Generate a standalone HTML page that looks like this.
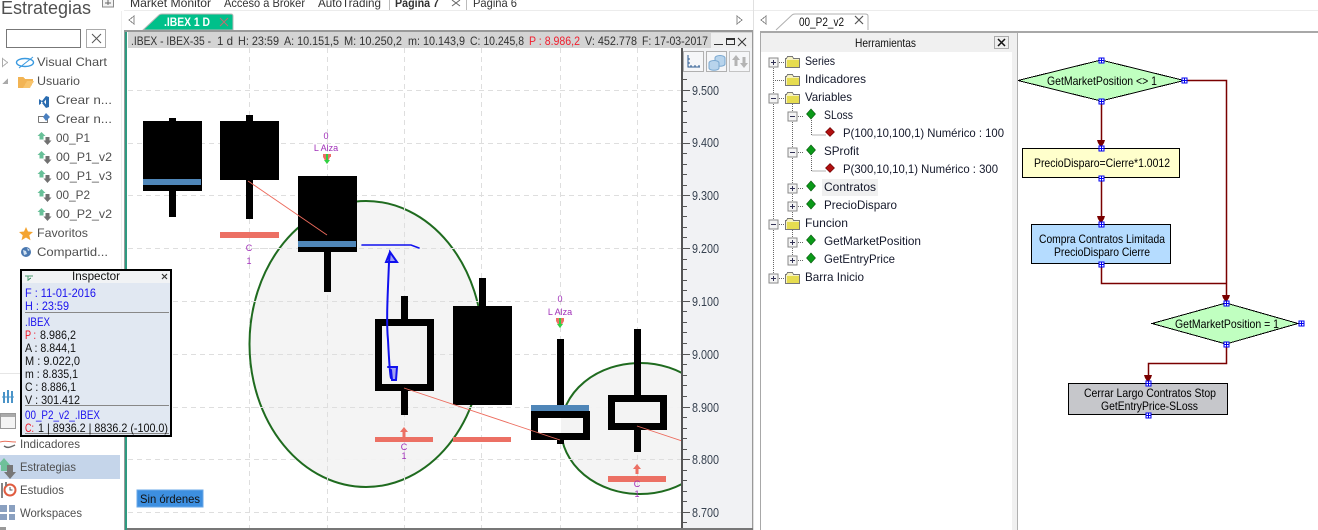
<!DOCTYPE html>
<html><head><meta charset="utf-8"><style>
html,body{margin:0;padding:0;background:#fff;width:1318px;height:530px;overflow:hidden}
svg{display:block;position:absolute;left:0;top:0}
text{font-family:"Liberation Sans",sans-serif;font-size:12px;white-space:pre}
.s{fill:#505050}.h{fill:#333}.t{fill:#14182a}.ax{fill:#36414f;font-size:13px}.f{fill:#000}.b{fill:#1a10ee}.k{fill:#111}.r{fill:#f01020}.m{fill:#a030b8;font-size:9px}
</style></head><body>
<svg width="1318" height="530" viewBox="0 0 1318 530" xmlns="http://www.w3.org/2000/svg" shape-rendering="crispEdges">
<defs>
<g id="folder"><path d="M0.5 3.500h1l1-2h5l1 2h6v9h-14z" fill="#f6f2c0" stroke="#777"/><rect x="2" y="5" width="12" height="7" fill="#e6dc50"/></g>
<g id="dg" shape-rendering="auto"><path d="M0-5 4.500 0 0 5-4.500 0z" fill="#0a9a18" stroke="#0a5a10" stroke-width=".6"/></g>
<g id="dr" shape-rendering="auto"><path d="M0-4.500 4.500 0 0 4.500-4.500 0z" fill="#b01010" stroke="#600" stroke-width=".6"/></g>
<g id="pl"><rect x="-4.500" y="-4.500" width="9" height="9" fill="#f4f4f4" stroke="#888"/><path d="M-2.500 0h5M0-2.500v5" stroke="#335"/></g>
<g id="mi"><rect x="-4.500" y="-4.500" width="9" height="9" fill="#f4f4f4" stroke="#888"/><path d="M-2.500 0h5" stroke="#335"/></g>
<g id="ha"><rect x="-2.500" y="-2.500" width="5" height="5" fill="#fff" stroke="#0000f0"/><path d="M-2.500 0h5M0-2.500v5" stroke="#0000f0"/></g>
<g id="ud" shape-rendering="auto"><path d="M3.500 0 7.500 4H5.500V7.500H1.500V4H-.5z" fill="#68c098"/><path d="M7.500 5h4V8.500h2L9.500 13 5.500 8.500h2z" fill="#707070"/></g>
<path id="ah" shape-rendering="auto" d="M-4-8h8l-1 3-2 3v2h-2v-2l-2-3z" fill="#7a0000"/>
<path id="upa" shape-rendering="auto" d="M0 0 4 5H1.500V10h-3V5H-4z" fill="#ec7064"/>
</defs>

<rect width="1318" height="530" fill="#fff"/>
<!-- top tabs -->
<rect x="124" y="10" width="1194" height="1" fill="#ececec"/>
<rect x="121" y="11" width="1" height="362" fill="#efefef"/>
<text class="h" x="130" y="7" textLength="81" lengthAdjust="spacingAndGlyphs">Market Monitor</text>
<text class="h" x="224" y="7" textLength="81" lengthAdjust="spacingAndGlyphs">Acceso a Broker</text>
<text class="h" x="318" y="7" textLength="63" lengthAdjust="spacingAndGlyphs">AutoTrading</text>
<text class="h" x="395" y="7" font-weight="700" textLength="44" lengthAdjust="spacingAndGlyphs">Página 7</text>
<path d="M389.500 0v10M466.500 0v10" stroke="#bbb"/>
<path d="M452 0l8 6M460 0l-8 6" stroke="#666" shape-rendering="auto"/>
<text class="h" x="473" y="7" textLength="44" lengthAdjust="spacingAndGlyphs">Página 6</text>

<!-- sidebar -->
<text x="1" y="14" style="font-size:18px" fill="#505050" textLength="90" lengthAdjust="spacingAndGlyphs">Estrategias</text>
<rect x="102.500" y="-1" width="11" height="8" fill="#f2f2f2" stroke="#888"/>
<path d="M108 0v5M105 3h6" stroke="#666"/>
<rect x="6.500" y="29.500" width="74" height="18" fill="#fff" stroke="#777"/>
<rect x="86.500" y="29.500" width="19" height="18" fill="#fff" stroke="#aaa"/>
<path d="M92 34l9 9M101 34l-9 9" stroke="#555" shape-rendering="auto"/>
<path d="M2.500 58.500l5 4-5 4z" fill="#fff" stroke="#aaa"/>
<path d="M8 78v6h-6z" fill="#aaa"/>
<g shape-rendering="auto"><ellipse cx="25" cy="62.500" rx="8.500" ry="4" fill="none" stroke="#3a9ae0" stroke-width="1.400"/><path d="M19 68l14-11" stroke="#3a9ae0"/></g>
<path d="M18 88v-11h5l2 2h8v2h-3l-3 7z" fill="#f2b454"/><path d="M23 88l4-7h7l-4 7z" fill="#f8c46c"/>
<path shape-rendering="auto" d="M39 99l3 2 4-5 3 1v10l-3 1-4-5-3 2zM41 101.500l2 1-2 1zM46 99.500l-2 2.500 2 2.500z" fill="#2a6cb0" fill-rule="evenodd"/>
<path d="M38.500 122.500v-6h5M38.500 122.500h9v-4" fill="none" stroke="#777"/><path d="M46 113l4 4-4 4-3-4z" fill="#4a80c0" shape-rendering="auto"/>
<use href="#ud" x="38" y="132"/><use href="#ud" x="38" y="151"/><use href="#ud" x="38" y="170"/><use href="#ud" x="38" y="189"/><use href="#ud" x="38" y="208"/>
<path shape-rendering="auto" d="M26 227l2 4.500 5 .5-3.700 3.200 1.200 5-4.500-2.700-4.500 2.700 1.200-5L19 232l5-.5z" fill="#f4a430"/>
<circle cx="26" cy="252" r="5" fill="#4a78b0" shape-rendering="auto"/><path d="M23 250l3 1 1 3-3 1zM27 248l3 2-2 1z" fill="#cfe0f0" shape-rendering="auto"/>
<text class="s" x="37" y="66" textLength="70" lengthAdjust="spacingAndGlyphs">Visual Chart</text>
<text class="s" x="37" y="85" textLength="43" lengthAdjust="spacingAndGlyphs">Usuario</text>
<text class="s" x="56" y="104" textLength="56" lengthAdjust="spacingAndGlyphs">Crear n...</text>
<text class="s" x="56" y="123" textLength="56" lengthAdjust="spacingAndGlyphs">Crear n...</text>
<text class="s" x="56" y="142" textLength="34" lengthAdjust="spacingAndGlyphs">00_P1</text>
<text class="s" x="56" y="161" textLength="56" lengthAdjust="spacingAndGlyphs">00_P1_v2</text>
<text class="s" x="56" y="180" textLength="56" lengthAdjust="spacingAndGlyphs">00_P1_v3</text>
<text class="s" x="56" y="199" textLength="34" lengthAdjust="spacingAndGlyphs">00_P2</text>
<text class="s" x="56" y="218" textLength="56" lengthAdjust="spacingAndGlyphs">00_P2_v2</text>
<text class="s" x="37" y="237" textLength="51" lengthAdjust="spacingAndGlyphs">Favoritos</text>
<text class="s" x="37" y="256" textLength="71" lengthAdjust="spacingAndGlyphs">Compartid...</text>
<rect x="0" y="373" width="122" height="1" fill="#e6e6e6"/>
<rect x="0" y="455" width="120" height="24" fill="#c5d5ea"/>
<path d="M4 392v11M8 390v13M12 391v12" stroke="#4a94c8" stroke-width="2"/><path d="M2 397h12" stroke="#4a94c8"/>
<rect x="0.500" y="413.500" width="15" height="15" fill="#f4f4f4" stroke="#999"/><rect x="1" y="414" width="14" height="3" fill="#aaa"/>
<g shape-rendering="auto"><path d="M0 442c5-2 8 0 16 0" stroke="#e8705c" fill="none"/><path d="M4 446c3 2 5 2 11-1" stroke="#666" fill="none" stroke-width="1.500"/></g>
<g shape-rendering="auto"><path d="M4 458l6 7h-3v6H1v-6h-3z" fill="#6fc09a"/><path d="M7 465h6v7h3l-6 7-6-7h3z" fill="#777"/></g>
<g shape-rendering="auto"><circle cx="10" cy="490" r="5.500" fill="#fff" stroke="#e05c40" stroke-width="2"/><path d="M10 487v3h2.500" stroke="#555" fill="none"/><path d="M2 483v15M6 482v4" stroke="#777" stroke-width="1.800"/></g>
<path d="M0 505h7v7H0zM9 505h6v7H9zM0 514h7v6H0zM9 514h6v6H9z" fill="#8aa0c0"/>
<rect x="0" y="527" width="6" height="3" fill="#999"/>
<text class="s" x="20" y="448" textLength="60" lengthAdjust="spacingAndGlyphs">Indicadores</text>
<text class="s" x="20" y="471" textLength="56" lengthAdjust="spacingAndGlyphs">Estrategias</text>
<text class="s" x="20" y="494" textLength="44" lengthAdjust="spacingAndGlyphs">Estudios</text>
<text class="s" x="20" y="517" textLength="62" lengthAdjust="spacingAndGlyphs">Workspaces</text>

<!-- chart tabs row -->
<path d="M134 16v8l-5-4z" fill="#fff" stroke="#888"/>
<path d="M143 30l16-15q1-1 3-1h69q2 0 2 2v14z" fill="#00c08a" stroke="#b8b8b8" shape-rendering="auto"/>
<text x="164" y="26" fill="#fff" font-weight="700" textLength="46" lengthAdjust="spacingAndGlyphs">.IBEX 1 D</text>
<path d="M220 18l8 8M228 18l-8 8" stroke="#c26a70" shape-rendering="auto"/>
<path d="M737 16v8l5-4z" fill="#fff" stroke="#888"/>

<!-- chart frame -->
<rect x="124" y="30" width="629" height="500" fill="#999"/>
<rect x="125" y="32" width="2" height="498" fill="#2e9a80"/>
<rect x="127" y="32" width="625" height="496" fill="#fff"/>
<rect x="128" y="32" width="624" height="16" fill="#d4d4d4"/>
<text class="h" x="131" y="45" textLength="80" lengthAdjust="spacingAndGlyphs">.IBEX - IBEX-35 -</text>
<text class="h" x="217" y="45" textLength="16" lengthAdjust="spacingAndGlyphs">1 d</text>
<text class="h" x="238" y="45" textLength="41" lengthAdjust="spacingAndGlyphs">H: 23:59</text>
<text class="h" x="284" y="45" textLength="55" lengthAdjust="spacingAndGlyphs">A: 10.151,5</text>
<text class="h" x="344" y="45" textLength="58" lengthAdjust="spacingAndGlyphs">M: 10.250,2</text>
<text class="h" x="408" y="45" textLength="57" lengthAdjust="spacingAndGlyphs">m: 10.143,9</text>
<text class="h" x="470" y="45" textLength="54" lengthAdjust="spacingAndGlyphs">C: 10.245,8</text>
<text x="529" y="45" fill="#f02030" textLength="51" lengthAdjust="spacingAndGlyphs">P : 8.986,2</text>
<text class="h" x="585" y="45" textLength="52" lengthAdjust="spacingAndGlyphs">V: 452.778</text>
<text class="h" x="642" y="45" textLength="66" lengthAdjust="spacingAndGlyphs">F: 17-03-2017</text>
<rect x="711" y="33" width="41" height="15" fill="#efefef"/>
<path d="M714 44.500h9" stroke="#333"/><rect x="726.500" y="38.500" width="8" height="6" fill="none" stroke="#333"/><rect x="726" y="38" width="9" height="2" fill="#333"/>
<path d="M738 38l8 8M746 38l-8 8" stroke="#333" shape-rendering="auto"/>

<!-- plot -->
<svg x="128" y="48" width="554" height="480" viewBox="128 48 554 480" shape-rendering="crispEdges">
<g stroke="#dedede" stroke-dasharray="5 4" fill="none">
<path d="M128 90.500h554M128 143.500h554M128 195.500h554M128 248.500h554M128 301.500h554M128 354.500h554M128 407.500h554M128 459.500h554M128 512.500h554"/>
<path d="M249.500 48v480M327.500 48v480M404.500 48v480M481.500 48v480M560.500 48v480M637.500 48v480"/>
</g>
<g shape-rendering="auto">
<ellipse cx="366" cy="344" rx="116.500" ry="143" fill="#f3f3f3" fill-opacity=".93" stroke="#1f6b1f" stroke-width="2"/>
<ellipse cx="640" cy="428.500" rx="79" ry="65.500" fill="#f3f3f3" fill-opacity=".93" stroke="#1f6b1f" stroke-width="2"/>
</g>
<g stroke="#dedede" stroke-dasharray="5 4" fill="none">
<path d="M251 354.500h230M251 301.500h230M251 248.500h230M251 407.500h230M560 459.500h122M327.500 205v275M404.500 205v280M637.500 365v128"/>
</g>
<!-- candles -->
<rect x="169" y="118" width="7" height="99"/><rect x="143" y="121" width="59" height="70"/><rect x="143" y="179" width="58" height="6" fill="#4f86b8"/>
<rect x="246" y="115" width="7" height="104"/><rect x="220" y="121" width="59" height="59"/><rect x="220" y="232" width="59" height="6" fill="#ec7064"/>
<rect x="324" y="176" width="7" height="116"/><rect x="298" y="176" width="59" height="76"/><rect x="298" y="241" width="58" height="6" fill="#4f86b8"/>
<rect x="401" y="296" width="7" height="119"/><rect x="375" y="319" width="59" height="72"/><rect x="382" y="326" width="45" height="58" fill="#f3f3f3"/>
<rect x="479" y="278" width="7" height="40"/><rect x="453" y="306" width="59" height="99"/>
<rect x="557" y="339" width="7" height="105"/><rect x="531" y="411" width="59" height="29"/><rect x="538" y="418" width="23" height="15" fill="#fff"/><rect x="561" y="418" width="22" height="15" fill="#f3f3f3"/><rect x="531" y="405" width="58" height="6" fill="#4f86b8"/>
<rect x="634" y="329" width="7" height="123"/><rect x="608" y="395" width="59" height="35"/><rect x="615" y="402" width="45" height="21" fill="#f3f3f3"/>
<rect x="375" y="437" width="58" height="5" fill="#ec7064"/><rect x="453" y="437" width="58" height="5" fill="#ec7064"/><rect x="608" y="476" width="58" height="6" fill="#ec7064"/>
<g shape-rendering="auto">
<g stroke="#ec6a5c" fill="none" stroke-width=".9"><path d="M248 181 327 235"/><path d="M404 388 560 440"/><path d="M637 426 682 441"/></g>
<use href="#upa" x="404" y="427"/><use href="#upa" x="637" y="464"/>
<path d="M323 154h8v3l-1 0-3 7-4-7z" fill="#ec7064"/><path d="M326 154h2v6h2l-3 4-3-4h2z" fill="#30d040"/>
<path d="M556 318h8v3l-4 7-4-7z" fill="#ec7064"/><path d="M559 318h2v6h2l-3 4-3-4h2z" fill="#30d040"/>
<g stroke="#1010ee" fill="none" stroke-width="2" stroke-linecap="round">
<path d="M362 245H411L419 248" stroke-width="1.600"/>
<path d="M389 262C388 290 386 320 388 340 389 360 390 375 391 378"/>
<path d="M390 252L386 262 397 262 390 252 389 262" fill="#5050f0" fill-opacity=".5"/>
<path d="M388 367H397L396 380 392 380 391 370" fill="#5050f0" fill-opacity=".5"/>
</g>
</g>
<g shape-rendering="auto" text-anchor="middle">
<text class="m" x="326" y="139">0</text><text class="m" x="326" y="151">L Alza</text>
<text class="m" x="560" y="302">0</text><text class="m" x="560" y="315">L Alza</text>
<text class="m" x="249" y="251">C</text><text class="m" x="249" y="264">1</text>
<text class="m" x="404" y="450">C</text><text class="m" x="404" y="459">1</text>
<text class="m" x="637" y="487">C</text><text class="m" x="637" y="497">1</text>
</g>
</svg>
<!-- Sin ordenes -->
<rect x="137" y="490" width="66" height="17" fill="#3d8fe0" stroke="#6aa8e8"/>
<text class="k" x="140" y="503" textLength="60" lengthAdjust="spacingAndGlyphs">Sin órdenes</text>

<!-- axis -->
<rect x="682" y="48" width="70" height="480" fill="#f1f2f4"/>
<rect x="681" y="48" width="2" height="480" fill="#555"/>
<rect x="127" y="528" width="626" height="2" fill="#777"/>
<g stroke="#555"><path d="M683 79.500h4M683 101.500h4M683 111.500h4M683 122.500h4M683 132.500h4M683 153.500h4M683 164.500h4M683 174.500h4M683 185.500h4M683 206.500h4M683 216.500h4M683 227.500h4M683 237.500h4M683 259.500h4M683 269.500h4M683 280.500h4M683 290.500h4M683 311.500h4M683 322.500h4M683 332.500h4M683 343.500h4M683 364.500h4M683 375.500h4M683 385.500h4M683 396.500h4M683 417.500h4M683 428.500h4M683 438.500h4M683 449.500h4M683 470.500h4M683 480.500h4M683 491.500h4M683 501.500h4M683 522.500h4"/>
<path d="M683 90.500h7M683 143.500h7M683 195.500h7M683 248.500h7M683 301.500h7M683 354.500h7M683 407.500h7M683 459.500h7M683 512.500h7"/></g>
<text class="ax" x="692" y="95" textLength="27" lengthAdjust="spacingAndGlyphs">9.500</text>
<text class="ax" x="692" y="147" textLength="27" lengthAdjust="spacingAndGlyphs">9.400</text>
<text class="ax" x="692" y="200" textLength="27" lengthAdjust="spacingAndGlyphs">9.300</text>
<text class="ax" x="692" y="253" textLength="27" lengthAdjust="spacingAndGlyphs">9.200</text>
<text class="ax" x="692" y="306" textLength="27" lengthAdjust="spacingAndGlyphs">9.100</text>
<text class="ax" x="692" y="359" textLength="27" lengthAdjust="spacingAndGlyphs">9.000</text>
<text class="ax" x="692" y="412" textLength="27" lengthAdjust="spacingAndGlyphs">8.900</text>
<text class="ax" x="692" y="464" textLength="27" lengthAdjust="spacingAndGlyphs">8.800</text>
<text class="ax" x="692" y="517" textLength="27" lengthAdjust="spacingAndGlyphs">8.700</text>
<rect x="683.500" y="51.500" width="20" height="20" fill="#f5f6f8" stroke="#b0b0b0"/>
<path d="M688 55v12h12M691 67v-2M695 67v-2M699 67v-2M688 59h2M688 63h2" stroke="#2a5a90" fill="none"/>
<rect x="706.500" y="51.500" width="20" height="20" fill="#f5f6f8" stroke="#b0b0b0"/>
<g shape-rendering="auto" fill="#b8d4ec" stroke="#7aa8d0"><ellipse cx="720" cy="58" rx="5" ry="2.500"/><path d="M715 58v6c0 3 10 3 10 0v-6"/><ellipse cx="714" cy="63" rx="5" ry="2.500"/><path d="M709 63v5c0 3 10 3 10 0v-5"/></g>
<rect x="729.500" y="51.500" width="20" height="20" fill="#f5f6f8" stroke="#c4c4c4"/>
<g shape-rendering="auto" fill="#b4b4b4"><path d="M736 55l4 5h-2.500v6h-3v-6H732zM744 68l-4-5h2.500v-6h3v6H748z"/></g>

<!-- right nav / tabs -->
<path d="M766 16v8l-5-4z" fill="#fff" stroke="#888"/>
<path d="M776 30l16-15q1-1 3-1h70q3 0 3 2v14" fill="#fff" stroke="#b0b0b0" shape-rendering="auto"/>
<text class="k" x="799" y="26" textLength="45" lengthAdjust="spacingAndGlyphs">00_P2_v2</text>
<path d="M855 16l8 8M863 16l-8 8" stroke="#555" shape-rendering="auto" stroke-width="1.200"/>
<rect x="760" y="31" width="558" height="2" fill="#a8a8a8"/>
<rect x="753" y="0" width="1" height="530" fill="#e0e0e0"/>
<rect x="760" y="31" width="1" height="499" fill="#a8a8a8"/>
<rect x="761" y="33" width="251" height="19" fill="#f0f0f0"/>
<text x="855" y="47" class="k" textLength="61" lengthAdjust="spacingAndGlyphs">Herramientas</text>
<rect x="994.500" y="36.500" width="14" height="12" fill="#eee" stroke="#aaa"/>
<path d="M998 39l7 7M1005 39l-7 7" stroke="#111" stroke-width="1.500" shape-rendering="auto"/>
<rect x="1012" y="33" width="5" height="497" fill="#f0f0f0"/>
<rect x="1017" y="33" width="1" height="497" fill="#b0b0b0"/>

<!-- tree -->
<g stroke="#666" stroke-dasharray="1 1" fill="none">
<path d="M773.500 62V278M773 62.500h11M773 80.500h11M773 98.500h11M773 224.500h11M773 278.500h11"/>
<path d="M792.500 98V261M792 116.500h12M792 152.500h12M792 188.500h12M792 206.500h12M792 242.500h12M792 260.500h12"/>
<path d="M811.500 120v15h14M811.500 156v15h14"/>
</g>
<rect x="822" y="179" width="56" height="17" fill="#f0f0f0"/>
<use href="#folder" x="785" y="55"/><use href="#folder" x="785" y="73"/><use href="#folder" x="785" y="91"/><use href="#folder" x="785" y="217"/><use href="#folder" x="785" y="271"/>
<use href="#pl" x="773.500" y="62.500"/><use href="#mi" x="773.500" y="98.500"/><use href="#mi" x="773.500" y="224.500"/><use href="#pl" x="773.500" y="278.500"/>
<use href="#mi" x="792.500" y="116.500"/><use href="#mi" x="792.500" y="152.500"/><use href="#pl" x="792.500" y="188.500"/><use href="#pl" x="792.500" y="206.500"/><use href="#pl" x="792.500" y="242.500"/><use href="#pl" x="792.500" y="260.500"/>
<use href="#dg" x="811" y="114"/><use href="#dg" x="811" y="150"/><use href="#dg" x="811" y="186"/><use href="#dg" x="811" y="204"/><use href="#dg" x="811" y="240"/><use href="#dg" x="811" y="258"/>
<use href="#dr" x="830" y="132"/><use href="#dr" x="830" y="168"/>
<text class="t" x="805" y="65" textLength="30" lengthAdjust="spacingAndGlyphs">Series</text>
<text class="t" x="805" y="83" textLength="61" lengthAdjust="spacingAndGlyphs">Indicadores</text>
<text class="t" x="805" y="101" textLength="47" lengthAdjust="spacingAndGlyphs">Variables</text>
<text class="t" x="824" y="119" textLength="29" lengthAdjust="spacingAndGlyphs">SLoss</text>
<text class="t" x="843" y="137" textLength="161" lengthAdjust="spacingAndGlyphs">P(100,10,100,1) Numérico : 100</text>
<text class="t" x="824" y="155" textLength="35" lengthAdjust="spacingAndGlyphs">SProfit</text>
<text class="t" x="843" y="173" textLength="155" lengthAdjust="spacingAndGlyphs">P(300,10,10,1) Numérico : 300</text>
<text class="t" x="824" y="191" textLength="52" lengthAdjust="spacingAndGlyphs">Contratos</text>
<text class="t" x="824" y="209" textLength="73" lengthAdjust="spacingAndGlyphs">PrecioDisparo</text>
<text class="t" x="805" y="227" textLength="43" lengthAdjust="spacingAndGlyphs">Funcion</text>
<text class="t" x="824" y="245" textLength="97" lengthAdjust="spacingAndGlyphs">GetMarketPosition</text>
<text class="t" x="824" y="263" textLength="71" lengthAdjust="spacingAndGlyphs">GetEntryPrice</text>
<text class="t" x="805" y="281" textLength="59" lengthAdjust="spacingAndGlyphs">Barra Inicio</text>

<!-- flow -->
<path shape-rendering="auto" fill="none" stroke="#7a0000" stroke-width="1.500" d="M1184 80.500h42.500V303M1101.500 101v47M1101.500 178v46M1101.500 264v19.500h125M1226.500 344v19.500h-78v19.500"/>
<use href="#ah" x="1101" y="148"/><use href="#ah" x="1101" y="224"/><use href="#ah" x="1226" y="303"/><use href="#ah" x="1148" y="383"/>
<path d="M1018 80.500 1101 60 1184 80.500 1101 101z" fill="#c0ffc0" stroke="#000"/>
<path d="M1152 323.500 1226 303 1298 323.500 1226 344z" fill="#c0ffc0" stroke="#000"/>
<rect x="1022.500" y="148.500" width="157" height="29" fill="#ffffcc" stroke="#000"/>
<rect x="1031.500" y="224.500" width="139" height="39" fill="#b5dcff" stroke="#000"/>
<rect x="1068.500" y="383.500" width="159" height="31" fill="#c6c7cb" stroke="#000"/>
<text class="f" x="1047" y="85" textLength="110" lengthAdjust="spacingAndGlyphs">GetMarketPosition &lt;&gt; 1</text>
<text class="f" x="1034" y="167" textLength="136" lengthAdjust="spacingAndGlyphs">PrecioDisparo=Cierre*1.0012</text>
<text class="f" x="1039" y="243" textLength="126" lengthAdjust="spacingAndGlyphs">Compra Contratos Limitada</text>
<text class="f" x="1054" y="256" textLength="96" lengthAdjust="spacingAndGlyphs">PrecioDisparo Cierre</text>
<text class="f" x="1175" y="328" textLength="104" lengthAdjust="spacingAndGlyphs">GetMarketPosition = 1</text>
<text class="f" x="1084" y="397" textLength="132" lengthAdjust="spacingAndGlyphs">Cerrar Largo Contratos Stop</text>
<text class="f" x="1101" y="410" textLength="97" lengthAdjust="spacingAndGlyphs">GetEntryPrice-SLoss</text>
<use href="#ha" x="1101.500" y="60.500"/><use href="#ha" x="1101.500" y="101.500"/><use href="#ha" x="1184.500" y="80.500"/>
<use href="#ha" x="1101.500" y="148.500"/><use href="#ha" x="1101.500" y="178.500"/><use href="#ha" x="1101.500" y="224.500"/><use href="#ha" x="1101.500" y="264.500"/>
<use href="#ha" x="1226.500" y="303.500"/><use href="#ha" x="1301.500" y="323.500"/><use href="#ha" x="1226.500" y="344.500"/>
<use href="#ha" x="1148.500" y="383.500"/><use href="#ha" x="1148.500" y="415.500"/>

<!-- inspector -->
<rect x="21" y="270" width="150" height="166" fill="#e1e8f2" stroke="#000" stroke-width="2"/>
<rect x="22" y="271" width="148" height="12" fill="#f1f3f5"/>
<path d="M25 276h8M28 276v5M28 280l3-2" stroke="#4a9a70" fill="none"/>
<text class="k" x="72" y="280" textLength="48" lengthAdjust="spacingAndGlyphs">Inspector</text>
<path d="M162 274l5 5M167 274l-5 5" stroke="#333" stroke-width="1.200" shape-rendering="auto"/>
<rect x="25" y="312" width="144" height="1" fill="#888"/><rect x="25" y="405" width="144" height="1" fill="#888"/><rect x="25" y="433" width="144" height="1" fill="#888"/>
<text class="b" x="25" y="297" textLength="71" lengthAdjust="spacingAndGlyphs">F : 11-01-2016</text>
<text class="b" x="25" y="310" textLength="44" lengthAdjust="spacingAndGlyphs">H : 23:59</text>
<text class="b" x="25" y="326" textLength="25" lengthAdjust="spacingAndGlyphs">.IBEX</text>
<text class="r" x="25" y="339" textLength="11" lengthAdjust="spacingAndGlyphs">P :</text>
<text class="k" x="40" y="339" textLength="36" lengthAdjust="spacingAndGlyphs">8.986,2</text>
<text class="k" x="25" y="352" textLength="51" lengthAdjust="spacingAndGlyphs">A : 8.844,1</text>
<text class="k" x="25" y="365" textLength="55" lengthAdjust="spacingAndGlyphs">M : 9.022,0</text>
<text class="k" x="25" y="378" textLength="53" lengthAdjust="spacingAndGlyphs">m : 8.835,1</text>
<text class="k" x="25" y="391" textLength="51" lengthAdjust="spacingAndGlyphs">C : 8.886,1</text>
<text class="k" x="25" y="404" textLength="55" lengthAdjust="spacingAndGlyphs">V : 301.412</text>
<text class="b" x="25" y="419" textLength="75" lengthAdjust="spacingAndGlyphs">00_P2_v2_.IBEX</text>
<text class="r" x="25" y="432" textLength="9" lengthAdjust="spacingAndGlyphs">C:</text>
<text class="k" x="38" y="432" textLength="130" lengthAdjust="spacingAndGlyphs">1 | 8936.2 | 8836.2 (-100.0)</text>
</svg>
</body></html>
